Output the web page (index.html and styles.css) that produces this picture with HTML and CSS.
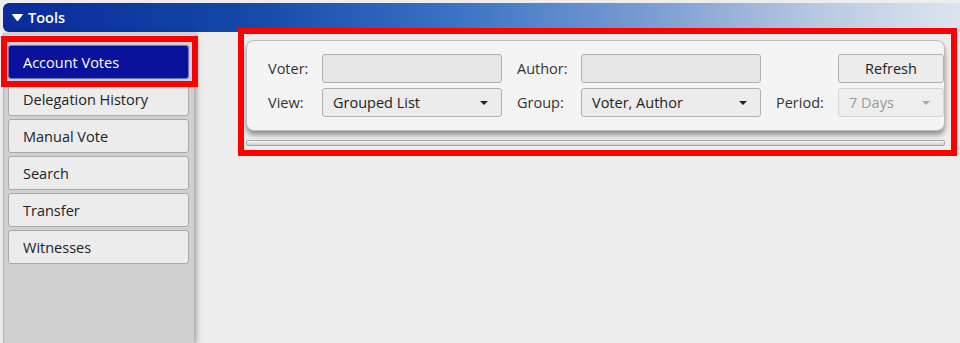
FILE: index.html
```html
<!DOCTYPE html>
<html>
<head>
<meta charset="utf-8">
<link rel="stylesheet" href="styles.css">
</head>
<body>
<div class="app">
  <div class="titlebar">
    <svg class="tri" width="11" height="8" viewBox="0 0 11 8"><path d="M0.5 0.5 H10.5 L5.5 7 Z" fill="#fff" stroke="#fff" stroke-linejoin="round"/></svg>
    <span class="title">Tools</span>
  </div>
  <div class="main">
    <nav class="sidebar">
      <button class="navbtn active mark">Account Votes</button>
      <button class="navbtn">Delegation History</button>
      <button class="navbtn">Manual Vote</button>
      <button class="navbtn">Search</button>
      <button class="navbtn">Transfer</button>
      <button class="navbtn">Witnesses</button>
    </nav>
    <section class="content">
      <div class="zone mark2">
        <div class="panel">
          <div class="form">
            <label class="lbl">Voter:</label>
            <div class="field"></div>
            <label class="lbl gap">Author:</label>
            <div class="field"></div>
            <span></span>
            <button class="btn">Refresh</button>

            <label class="lbl">View:</label>
            <div class="select"><span>Grouped List</span><i class="caret"></i></div>
            <label class="lbl gap">Group:</label>
            <div class="select"><span>Voter, Author</span><i class="caret"></i></div>
            <label class="lbl gap">Period:</label>
            <div class="select disabled"><span>7 Days</span><i class="caret"></i></div>
          </div>
        </div>
        <div class="splitter"></div>
      </div>
    </section>
  </div>
</div>
</body>
</html>
```
FILE: styles.css
```css
* { box-sizing: border-box; }
html, body { margin: 0; padding: 0; }
body {
  width: 960px;
  height: 343px;
  overflow: hidden;
  background: #ededed;
  font-family: "Open Sans", "Noto Sans", sans-serif;
  font-size: 14.5px;
  color: #222;
}
.app { padding-top: 3px; }
.titlebar {
  margin-left: 3px;
  height: 29px;
  border-radius: 6px 0 0 6px;
  background: linear-gradient(to right, #0a2a9a 0%, #1447a8 25%, #3a72c4 47%, #7ea0d2 69%, #b8c8e2 85%, #dde4ee 100%);
  display: flex;
  align-items: center;
  padding-left: 9px;
  gap: 5px;
  color: #fff;
}
.tri { margin-top: 1px; }
.title { font-weight: 600; font-size: 14.5px; }
.main { display: flex; height: 311px; margin-top: 1px; }
.sidebar {
  margin-left: 3px;
  width: 191px;
  background: #d0d0d0;
  border-left: 1px solid #b4b4b4;
  box-shadow: 3px 0 5px rgba(0,0,0,0.28);
  padding: 12px 0 0 4px;
  display: flex;
  flex-direction: column;
  gap: 3px;
  position: relative;
  z-index: 1;
}
.navbtn {
  width: 181px;
  height: 34px;
  text-align: left;
  padding: 0 0 0 14px;
  font-family: inherit;
  font-size: 14.5px;
  color: #222;
  background: #ececec;
  border: 1px solid #a9a9a9;
  border-radius: 3px;
}
.navbtn.active {
  background: #0a129c;
  color: #fff;
  border-color: #6a72c8;
}
.mark { position: relative; }
.mark::after {
  content: "";
  position: absolute;
  left: -8px; top: -10px; right: -10px; bottom: -9px;
  border: 6px solid #ff0000;
  pointer-events: none;
}
.content { flex: 1; padding: 7px 0 0 52px; }
.zone { width: 699px; position: relative; }
.mark2::after {
  content: "";
  position: absolute;
  left: -8px; top: -12px; right: -12px; bottom: -10px;
  border: 6px solid #ff0000;
  pointer-events: none;
}
.panel {
  height: 91px;
  background: #f4f4f4;
  border: 1px solid #bdbdbd;
  border-radius: 8px;
  box-shadow: 0 4px 5px rgba(0,0,0,0.38);
  padding: 13px 0 0 21px;
}
.form {
  display: grid;
  grid-template-columns: 54px 180px 79px 180px 77px 106px;
  grid-template-rows: 29px 29px;
  row-gap: 5px;
  align-items: center;
}
.lbl { color: #333; }
.lbl.gap { padding-left: 15px; }
.field {
  height: 29px;
  background: #e6e6e6;
  border: 1px solid #b0b0b0;
  border-radius: 3px;
}
.select {
  height: 29px;
  background: #ececec;
  border: 1px solid #b0b0b0;
  border-radius: 3px;
  display: flex;
  align-items: center;
  justify-content: space-between;
  padding: 0 13px 0 10px;
  color: #222;
}
.caret {
  width: 0; height: 0;
  border-left: 4px solid transparent;
  border-right: 4px solid transparent;
  border-top: 4px solid #222;
}
.select.disabled { color: #9a9a9a; border-color: #d4d4d4; background: #eeeeee; }
.select.disabled .caret { border-top-color: #aaa; }
.btn {
  height: 29px;
  font-family: inherit;
  font-size: 14.5px;
  color: #222;
  background: #ececec;
  border: 1px solid #b0b0b0;
  border-radius: 3px;
  padding: 0;
}
.splitter {
  margin-top: 9px;
  height: 6px;
  border: 1px solid #a8a8a8;
  border-radius: 2px;
  background: linear-gradient(#f8f8f8, #cfcfcf);
}
```
